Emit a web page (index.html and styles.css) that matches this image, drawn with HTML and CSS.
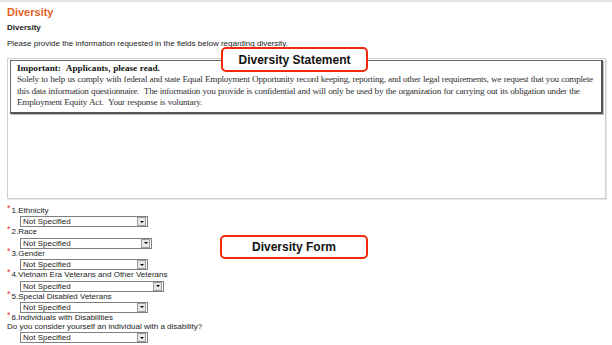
FILE: index.html
```html
<!DOCTYPE html>
<html lang="en">
<head>
  <meta charset="UTF-8"/>
  <title>Diversity</title>
  <link rel="stylesheet" href="styles.css">
</head>
<body>
  <div class="page">
    <h1 class="title">Diversity</h1>
    <h2 class="subtitle">Diversity</h2>
    <p class="intro">Please provide the information requested in the fields below regarding diversity.</p>

    <div class="statement-frame">
      <div class="statement">
        <strong>Important:&nbsp; Applicants, please read.</strong><br>
        Solely to help us comply with federal and state Equal Employment Opportunity record keeping, reporting, and other legal requirements, we request that you complete<br>
        this data information questionnaire.&nbsp; The information you provide is confidential and will only be used by the organization for carrying out its obligation under the<br>
        Employment Equity Act.&nbsp; Your response is voluntary.
      </div>
    </div>

    <div class="form">
      <div class="field">
        <div class="label"><span class="req">*</span>1.Ethnicity</div>
        <div class="select w128"><span>Not Specified</span><i class="arrow"></i></div>
      </div>
      <div class="field">
        <div class="label"><span class="req">*</span>2.Race</div>
        <div class="select w132"><span>Not Specified</span><i class="arrow"></i></div>
      </div>
      <div class="field">
        <div class="label"><span class="req">*</span>3.Gender</div>
        <div class="select w128"><span>Not Specified</span><i class="arrow"></i></div>
      </div>
      <div class="field">
        <div class="label"><span class="req">*</span>4.Vietnam Era Veterans and Other Veterans</div>
        <div class="select w144"><span>Not Specified</span><i class="arrow"></i></div>
      </div>
      <div class="field">
        <div class="label"><span class="req">*</span>5.Special Disabled Veterans</div>
        <div class="select w128"><span>Not Specified</span><i class="arrow"></i></div>
      </div>
      <div class="field">
        <div class="label"><span class="req">*</span>6.Individuals with Disabilities</div>
        <div class="question">Do you consider yourself an individual with a disability?</div>
        <div class="select w128"><span>Not Specified</span><i class="arrow"></i></div>
      </div>
    </div>

    <div class="callout callout-statement">Diversity Statement</div>
    <div class="callout callout-form">Diversity Form</div>
  </div>
</body>
</html>
```

FILE: styles.css
```css
:root {
  --orange: #e0621e;
  --red: #f2280c;
  --text: #222;
  --font-stack: 'Liberation Sans', Arial, sans-serif;
}
* { box-sizing: border-box; }
body {
  margin: 0;
  font-family: var(--font-stack);
  font-size: 8px;
  color: var(--text);
  background: #fff;
}
.page {
  position: relative;
  height: 345px;
  padding: 3px 7px 0;
  border-top: 2px solid #e4e4e4;
}
.title {
  margin: 0; font-size: 11px; line-height: 14px;
  color: var(--orange); font-weight: bold;
}
.subtitle {
  margin: 4px 0 0; font-size: 8px; line-height: 10px; font-weight: bold;
}
.intro { margin: 6px 0 0; line-height: 10px; }

.statement-frame {
  margin-top: 9px;
  width: 599px; height: 141px;
  border: 1px solid #cfcfcf;
  box-shadow: 1px 1px 0 #e6e6e6;
  padding: 1px 2px 0 2px;
}
.statement {
  border: 1px solid #666;
  border-right: 2px solid #555;
  border-bottom: 2px solid #555;
  box-shadow: 1px 1px 0 #bbb;
  padding: 2px 2px 4px 6px;
  font-family: 'Liberation Serif', 'Times New Roman', serif;
  font-size: 9.2px;
  letter-spacing: -0.27px;
  word-spacing: 0.4px;
  line-height: 11.3px;
  color: #333;
  white-space: nowrap;
}
.statement strong { color: #111; letter-spacing: 0; }

.form { margin-top: 7px; }
.field { display: flex; flex-direction: column; align-items: flex-start; }
.label { height: 10.4px; line-height: 10.4px; white-space: nowrap; }
.req {
  color: #e8352a; font-size: 9px; line-height: 0;
  vertical-align: 2px; margin-right: 1px;
}
.question { height: 10px; line-height: 10px; margin-top: -1px; }
.select {
  display: flex; align-items: center; justify-content: space-between;
  height: 11px; margin-left: 13px;
  border: 1px solid #7f7f7f;
  padding-left: 2px;
  line-height: 9px;
  background: #fff;
}
.select span { font-size: 8px; }
.w128 { width: 128px; }
.w132 { width: 132px; }
.w144 { width: 144px; }
.arrow {
  display: flex; align-items: center; justify-content: center;
  width: 9px; height: 9px; margin-right: 1px;
  background: #e8e8e8; border: 1px solid #9a9a9a;
}
.arrow::after {
  content: ''; border-left: 2px solid transparent; border-right: 2px solid transparent;
  border-top: 2px solid #000;
}

.callout {
  position: absolute;
  display: flex; align-items: center; justify-content: center;
  background: #fff;
  border: 2px solid var(--red);
  border-radius: 5px;
  font-size: 12px; font-weight: bold; color: #111;
}
.callout-statement { left: 221px; top: 45px; width: 147px; height: 25px; }
.callout-form { left: 220px; top: 233px; width: 148px; height: 24px; }
```
